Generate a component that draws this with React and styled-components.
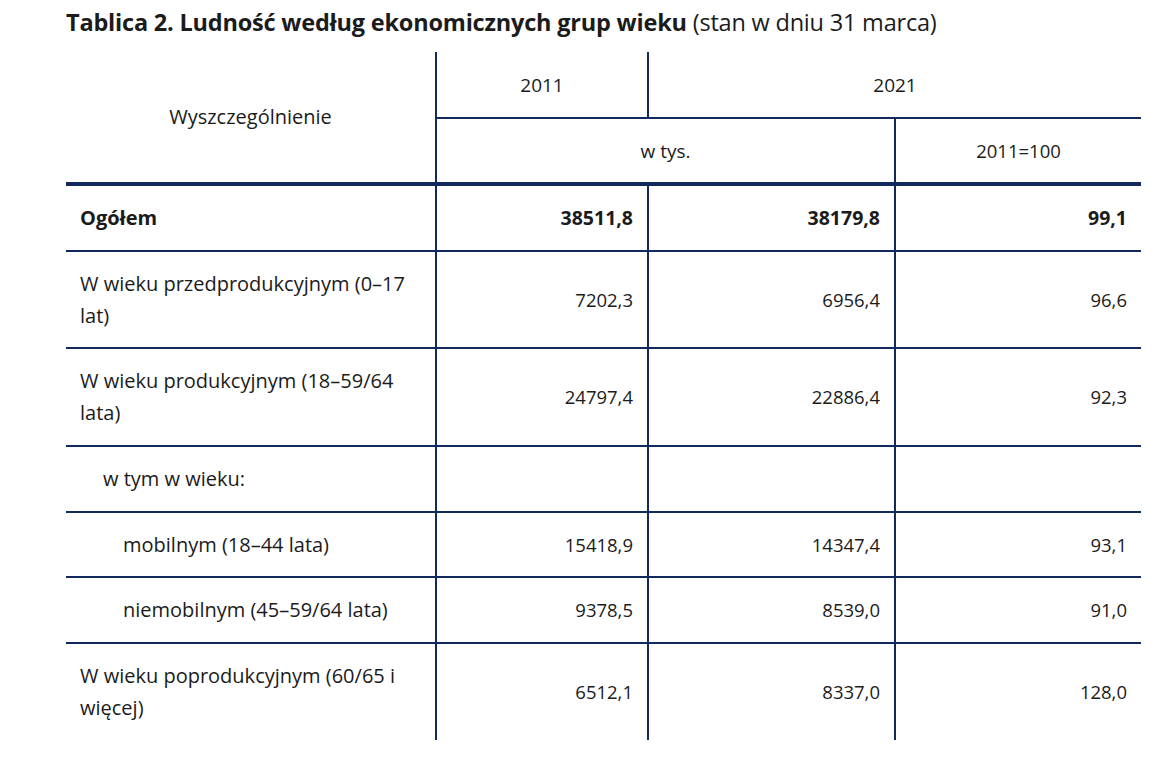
import styled, { createGlobalStyle } from 'styled-components';

const GlobalStyle = createGlobalStyle`
  body {
    margin: 0;
    background: #ffffff;
    font-family: "Open Sans", "Noto Sans", sans-serif;
    color: #1b1b1b;
  }
`;

const LINE = '#11295c';

const Page = styled.div`
  padding: 6px 0 0 66px;
  width: 1075px;
`;

const Title = styled.h1`
  margin: 0;
  font-size: 23.5px;
  line-height: 32px;
  font-weight: 700;
  letter-spacing: -0.2px;
`;

const TitleNote = styled.span`
  font-weight: 400;
`;

const Table = styled.table`
  margin-top: 14px;
  width: 1075px;
  border-collapse: collapse;
  table-layout: fixed;
`;

const HeadCell = styled.th`
  font-weight: 400;
  font-size: ${p => p.$size || 19}px;
  line-height: 24px;
  height: ${p => p.$h || 'auto'};
  padding: 0 14px;
  text-align: center;
  vertical-align: middle;
  border-left: ${p => (p.$first ? 'none' : `2px solid ${LINE}`)};
  border-bottom: ${p => (p.$thick ? `4px solid ${LINE}` : `2px solid ${LINE}`)};
`;

const Row = styled.tr`
  &:last-child td {
    border-bottom: none;
  }
`;

const Cell = styled.td`
  font-size: 20px;
  line-height: 32px;
  padding: 15.85px 14px 15.85px ${p => p.$indent || 14}px;
  font-weight: ${p => (p.$bold ? 700 : 400)};
  text-align: left;
  vertical-align: middle;
  border-bottom: 2px solid ${LINE};
`;

const NumCell = styled(Cell)`
  font-size: ${p => (p.$bold ? 19.5 : 18.5)}px;
  text-align: right;
  border-left: 2px solid ${LINE};
`;

const rows = [
  { label: 'Ogółem', bold: true, values: ['38511,8', '38179,8', '99,1'] },
  {
    label: ['W wieku przedprodukcyjnym (0–17', 'lat)'],
    values: ['7202,3', '6956,4', '96,6'],
  },
  {
    label: ['W wieku produkcyjnym (18–59/64', 'lata)'],
    values: ['24797,4', '22886,4', '92,3'],
  },
  { label: 'w tym w wieku:', indent: 37, values: ['', '', ''] },
  { label: 'mobilnym (18–44 lata)', indent: 57, values: ['15418,9', '14347,4', '93,1'] },
  { label: 'niemobilnym (45–59/64 lata)', indent: 57, values: ['9378,5', '8539,0', '91,0'] },
  {
    label: ['W wieku poprodukcyjnym (60/65 i', 'więcej)'],
    values: ['6512,1', '8337,0', '128,0'],
  },
];

const Label = ({ text }) =>
  Array.isArray(text) ? (
    <>
      {text[0]}
      <br />
      {text[1]}
    </>
  ) : (
    text
  );

export default function App() {
  return (
    <Page>
      <GlobalStyle />
      <Title>
        Tablica 2. Ludność według ekonomicznych grup wieku{' '}
        <TitleNote>(stan w dniu 31 marca)</TitleNote>
      </Title>
      <Table>
        <colgroup>
          <col style={{ width: 370 }} />
          <col style={{ width: 212 }} />
          <col style={{ width: 247 }} />
          <col style={{ width: 246 }} />
        </colgroup>
        <thead>
          <tr>
            <HeadCell rowSpan={2} $first $thick $size={20}>
              Wyszczególnienie
            </HeadCell>
            <HeadCell $h="65px">2011</HeadCell>
            <HeadCell colSpan={2}>2021</HeadCell>
          </tr>
          <tr>
            <HeadCell colSpan={2} $h="63px" $thick>
              w tys.
            </HeadCell>
            <HeadCell $thick $size={18.5}>2011=100</HeadCell>
          </tr>
        </thead>
        <tbody>
          {rows.map((r, i) => (
            <Row key={i}>
              <Cell $bold={r.bold} $indent={r.indent}>
                <Label text={r.label} />
              </Cell>
              {r.values.map((v, j) => (
                <NumCell key={j} $bold={r.bold}>
                  {v}
                </NumCell>
              ))}
            </Row>
          ))}
        </tbody>
      </Table>
    </Page>
  );
}
